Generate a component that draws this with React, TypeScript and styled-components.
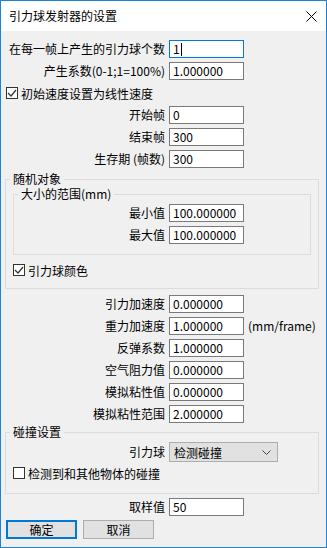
import React from 'react'
import styled, { createGlobalStyle } from 'styled-components'

const FONT = '"Noto Sans CJK SC", "Noto Sans", sans-serif'

const GlobalStyle = createGlobalStyle`
  html, body {
    margin: 0;
    padding: 0;
    background: #f0f0f0;
  }
  * {
    box-sizing: border-box;
  }
`

const Window = styled.div`
  width: 327px;
  height: 548px;
  border: 1px solid #1883d7;
  background: #f0f0f0;
  display: flex;
  flex-direction: column;
  font-family: ${FONT};
  font-size: 12px;
  color: #000;
  overflow: hidden;
`

const TitleBar = styled.div`
  height: 30px;
  flex: none;
  background: #fff;
  display: flex;
  align-items: center;
  justify-content: space-between;
  padding-left: 8px;
`

const Title = styled.span`
  font-size: 12px;
  line-height: 16px;
`

const CloseButton = styled.div`
  width: 30px;
  height: 30px;
  display: flex;
  align-items: center;
  justify-content: center;
`

const Body = styled.div`
  display: flex;
  flex-direction: column;
  padding: 9px 7px 0 5px;
`

const Row = styled.div<{ $labelW: number; $mt?: number }>`
  display: grid;
  grid-template-columns: ${(p) => p.$labelW}px 75px auto;
  column-gap: 4px;
  align-items: center;
  height: 18px;
  margin-top: ${(p) => p.$mt ?? 4}px;
`

const ComboRow = styled(Row)`
  grid-template-columns: ${(p) => p.$labelW}px 109px;
  height: 20px;
`

const Label = styled.span`
  text-align: right;
  white-space: nowrap;
  line-height: 18px;
`

const Field = styled.div<{ $focused?: boolean }>`
  height: 18px;
  border: 1px solid ${(p) => (p.$focused ? '#0078d7' : '#7a7a7a')};
  background: #fff;
  padding: 0 3px;
  line-height: 16px;
  white-space: nowrap;
  display: flex;
  align-items: center;
`

const Caret = styled.span`
  display: inline-block;
  width: 1px;
  height: 13px;
  background: #000;
  margin-left: 1px;
`

const Unit = styled.span`
  white-space: nowrap;
  line-height: 18px;
`

const Combo = styled.div`
  height: 20px;
  border: 1px solid #adadad;
  background: #e1e1e1;
  display: flex;
  align-items: center;
  justify-content: space-between;
  padding: 0 6px 0 4px;
`

const CheckRow = styled.label<{ $mt?: number }>`
  display: flex;
  align-items: center;
  height: 18px;
  gap: 3px;
  margin-top: ${(p) => p.$mt ?? 4}px;
  white-space: nowrap;
`

const Box = styled.span`
  width: 12px;
  height: 12px;
  border: 1px solid #333;
  background: #fff;
  display: flex;
  align-items: center;
  justify-content: center;
`

const Group = styled.fieldset<{ $mt?: number; $pt: number; $pb: number; $inner?: boolean }>`
  margin: ${(p) => p.$mt ?? 0}px 0 0 ${(p) => (p.$inner ? 0 : -1)}px;
  padding: ${(p) => p.$pt}px 7px ${(p) => p.$pb}px 7px;
  border: 1px solid #dcdcdc;
  min-inline-size: 0;
  display: flex;
  flex-direction: column;
`

const Legend = styled.legend`
  padding: 0 3px;
  margin-left: -3px;
  line-height: 14px;
  font-size: 12px;
`

const ButtonRow = styled.div`
  display: flex;
  gap: 6px;
  margin-top: 4px;
`

const Button = styled.div<{ $default?: boolean }>`
  width: 71px;
  height: 19px;
  background: #e1e1e1;
  border: ${(p) => (p.$default ? '2px solid #0078d7' : '1px solid #adadad')};
  display: flex;
  align-items: center;
  justify-content: center;
  line-height: 15px;
`

function Check({ checked, label, mt }: { checked: boolean; label: string; mt?: number }) {
  return (
    <CheckRow $mt={mt}>
      <Box>
        {checked && (
          <svg width="10" height="10" viewBox="0 0 10 10">
            <polyline points="1,5 4,8 9,2" fill="none" stroke="#333" strokeWidth="1.2" />
          </svg>
        )}
      </Box>
      {label}
    </CheckRow>
  )
}

function NumRow({
  label,
  value,
  labelW = 159,
  mt,
  unit,
  focused,
}: {
  label: string
  value: string
  labelW?: number
  mt?: number
  unit?: string
  focused?: boolean
}) {
  return (
    <Row $labelW={labelW} $mt={mt}>
      <Label>{label}</Label>
      <Field $focused={focused}>
        {value}
        {focused && <Caret />}
      </Field>
      {unit && <Unit>{unit}</Unit>}
    </Row>
  )
}

export default function App() {
  return (
    <>
      <GlobalStyle />
      <Window>
        <TitleBar>
          <Title>引力球发射器的设置</Title>
          <CloseButton>
            <svg width="11" height="11" viewBox="0 0 11 11">
              <path d="M0.5 0.5 L10.5 10.5 M10.5 0.5 L0.5 10.5" stroke="#000" strokeWidth="1" />
            </svg>
          </CloseButton>
        </TitleBar>
        <Body>
          <NumRow label="在每一帧上产生的引力球个数" value="1" mt={0} focused />
          <NumRow label="产生系数(0-1;1=100%)" value="1.000000" />
          <Check checked label="初始速度设置为线性速度" />
          <NumRow label="开始帧" value="0" />
          <NumRow label="结束帧" value="300" />
          <NumRow label="生存期 (帧数)" value="300" />

          <Group $mt={4} $pt={1} $pb={9}>
            <Legend>随机对象</Legend>
            <Group $inner $pt={3} $pb={10}>
              <Legend>大小的范围(mm)</Legend>
              <NumRow label="最小值" value="100.000000" labelW={144} mt={0} />
              <NumRow label="最大值" value="100.000000" labelW={144} />
            </Group>
            <Check checked label="引力球颜色" mt={6} />
          </Group>

          <NumRow label="引力加速度" value="0.000000" mt={6} />
          <NumRow label="重力加速度" value="1.000000" unit="(mm/frame)" />
          <NumRow label="反弹系数" value="1.000000" />
          <NumRow label="空气阻力值" value="0.000000" />
          <NumRow label="模拟粘性值" value="0.000000" />
          <NumRow label="模拟粘性范围" value="2.000000" />

          <Group $mt={2} $pt={3} $pb={11}>
            <Legend>碰撞设置</Legend>
            <ComboRow $labelW={152} $mt={0}>
              <Label>引力球</Label>
              <Combo>
                <span>检测碰撞</span>
                <svg width="9" height="5" viewBox="0 0 9 5">
                  <polyline points="0.5,0.5 4.5,4.5 8.5,0.5" fill="none" stroke="#444" strokeWidth="1" />
                </svg>
              </Combo>
            </ComboRow>
            <Check checked={false} label="检测到和其他物体的碰撞" mt={2} />
          </Group>

          <NumRow label="取样值" value="50" />
          <ButtonRow>
            <Button $default>确定</Button>
            <Button>取消</Button>
          </ButtonRow>
        </Body>
      </Window>
    </>
  )
}
